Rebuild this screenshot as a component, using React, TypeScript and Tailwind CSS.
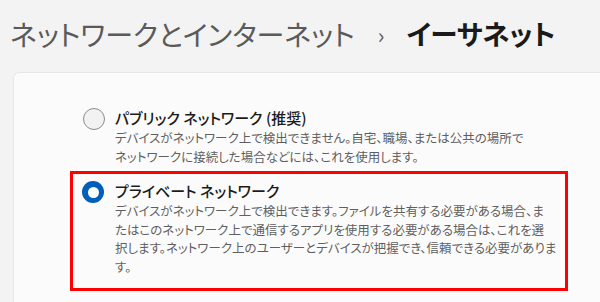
export default function App() {
  const font = { fontFamily: '"Noto Sans CJK JP", "Noto Sans", sans-serif' };
  return (
    <div
      className="w-[600px] h-[302px] overflow-hidden bg-[#f3f3f3] [font-feature-settings:'palt']"
      style={font}
    >
      {/* breadcrumb header */}
      <div className="flex items-center h-[72px] pl-[10px] pb-[4px]">
        <span className="text-[28px] leading-none text-[#5a5a5a]">ネットワークとインターネット</span>
        <span className="text-[22px] leading-none text-[#5a5a5a] ml-[23px] mr-[22px]">›</span>
        <span className="text-[27.5px] leading-none font-bold text-[#1a1a1a] tracking-[-0.3px]">イーサネット</span>
      </div>

      {/* settings card */}
      <div className="ml-[13px] w-[620px] h-[240px] bg-[#fbfbfb] border-l border-t border-[#e6e6e6] rounded-tl-[6px] pt-[35px]">
        <div className="flex gap-[10px] pl-[69px]">
          <div className="w-[22px] h-[22px] shrink-0 rounded-full border border-[#8b8b8b] bg-[#f2f2f2]" />
          <div className="flex flex-col">
            <div className="text-[15px] leading-[20px] font-medium text-[#1b1b1b]">パブリック ネットワーク (推奨)</div>
            <div className="text-[12.5px] leading-[18.5px] text-[#5f5f5f] mt-[1px]">
              デバイスがネットワーク上で検出できません。自宅、職場、または公共の場所で
              <br />
              ネットワークに接続した場合などには、これを使用します。
            </div>
          </div>
        </div>

        <div className="ml-[56px] mt-[5px] w-[498px] h-[120px] border-[3px] border-[#ff0000] pl-[9px] pt-[7px]">
          <div className="flex gap-[11px]">
            <div className="w-[22px] h-[22px] shrink-0 rounded-full bg-[#005fb8] flex items-center justify-center">
              <div className="w-[11px] h-[11px] rounded-full bg-white" />
            </div>
            <div className="flex flex-col">
              <div className="text-[15px] leading-[20px] font-medium text-[#1b1b1b]">プライベート ネットワーク</div>
              <div className="text-[12.5px] leading-[18.5px] text-[#5f5f5f] mt-[1px]">
                デバイスがネットワーク上で検出できます。ファイルを共有する必要がある場合、ま
                <br />
                たはこのネットワーク上で通信するアプリを使用する必要がある場合は、これを選
                <br />
                択します。ネットワーク上のユーザーとデバイスが把握でき、信頼できる必要がありま
                <br />
                す。
              </div>
            </div>
          </div>
        </div>
      </div>
    </div>
  );
}
